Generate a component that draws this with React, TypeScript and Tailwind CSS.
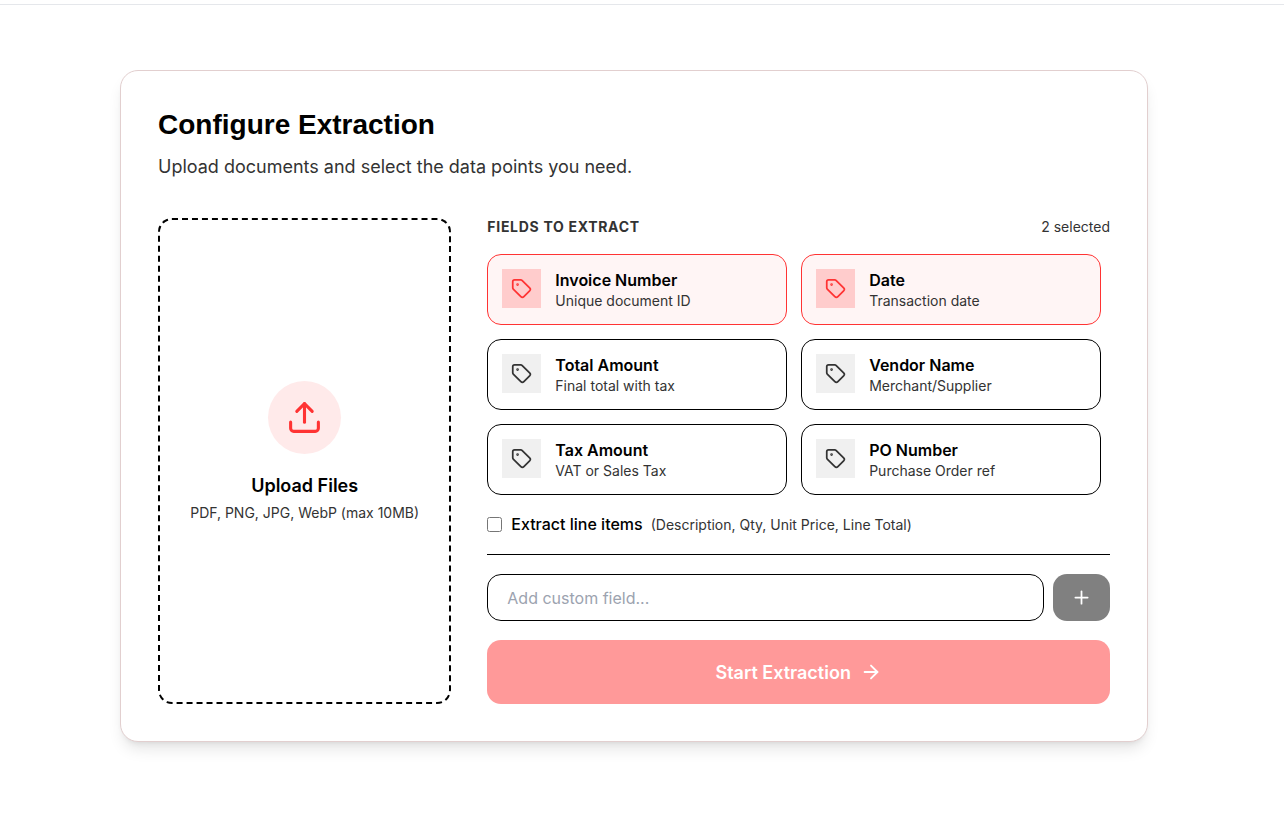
import { ArrowRight, Plus, Tag, Upload } from "lucide-react";
import { useState } from "react";

interface Field {
    id: string;
    label: string;
    description: string;
}

const defaultFields: Field[] = [
    { id: "invoice_number", label: "Invoice Number", description: "Unique document ID" },
    { id: "date", label: "Date", description: "Transaction date" },
    { id: "total_amount", label: "Total Amount", description: "Final total with tax" },
    { id: "vendor_name", label: "Vendor Name", description: "Merchant/Supplier" },
    { id: "tax_amount", label: "Tax Amount", description: "VAT or Sales Tax" },
    { id: "po_number", label: "PO Number", description: "Purchase Order ref" },
];

interface FieldCardProps {
    field: Field;
    selected: boolean;
    onToggle: (id: string) => void;
}

function FieldCard({ field, selected, onToggle }: FieldCardProps) {
    return (
        <button
            type="button"
            aria-pressed={selected}
            onClick={() => onToggle(field.id)}
            className={`flex items-start gap-[14px] rounded-[14px] border p-[14px] text-left cursor-pointer ${selected ? "border-[#ff3333] bg-[#fff5f5]" : "border-black bg-white"}`}
        >
            <span className={`flex size-[39px] shrink-0 items-center justify-center ${selected ? "bg-[#ffcccc] text-[#ff3333]" : "bg-[#f0f0f0] text-[#333333]"}`}>
                <Tag size={21} strokeWidth={2} />
            </span>
            <span className="flex flex-col">
                <span className="text-[16px] leading-[22px] font-semibold text-black">{field.label}</span>
                <span className="text-[14px] leading-[19px] text-[#333333]">{field.description}</span>
            </span>
        </button>
    );
}

export default function App() {
    const [fields, setFields] = useState(defaultFields);
    const [selected, setSelected] = useState(["invoice_number", "date"]);
    const [lineItems, setLineItems] = useState(false);
    const [custom, setCustom] = useState("");

    const toggleField = (id: string) => {
        setSelected(selected.includes(id) ? selected.filter((item) => item !== id) : [...selected, id]);
    };

    const addField = () => {
        const label = custom.trim();
        if (!label) return;
        setFields([...fields, { id: label, label, description: "Custom field" }]);
        setSelected([...selected, label]);
        setCustom("");
    };

    return (
        <div className="min-h-screen bg-white pt-1 font-['Inter',sans-serif] text-black">
            <header className="border-t border-[#e5e7eb]" />

            <main className="pt-[65px] pb-[73px] pl-4 pr-8">
                <section className="mx-auto max-w-[1028px] rounded-[18px] border border-[#e2cfcf] bg-white p-[37px] shadow-lg">
                    <h1 className="font-['Liberation_Sans',Arial,sans-serif] text-[28px] leading-[34px] font-bold">Configure Extraction</h1>
                    <p className="mt-3 text-[18px] leading-[26px] text-[#333333]">
                        Upload documents and select the data points you need.
                    </p>

                    <div className="mt-[38px] grid grid-cols-3 gap-9">
                        <label className="flex cursor-pointer flex-col items-center justify-center rounded-[14px] border-2 border-dashed border-black text-center">
                            <input type="file" multiple className="sr-only" />
                            <span className="flex size-[73px] items-center justify-center rounded-full bg-[#ffeaea] text-[#ff3333]">
                                <Upload size={37} />
                            </span>
                            <span className="mt-[19px] text-[18px] leading-[26px] font-semibold">Upload Files</span>
                            <span className="mt-1 mb-[18px] text-[14px] leading-5 text-[#333333]">PDF, PNG, JPG, WebP (max 10MB)</span>
                        </label>

                        <div className="col-span-2">
                            <div className="flex items-center justify-between text-[14px] leading-[18px] text-[#333333]">
                                <h2 className="font-bold tracking-wider uppercase">Fields to Extract</h2>
                                <span>{selected.length} selected</span>
                            </div>

                            <div className="mt-[18px] grid grid-cols-2 gap-[14px] pr-[9px]">
                                {fields.map((field) => (
                                    <FieldCard
                                        key={field.id}
                                        field={field}
                                        selected={selected.includes(field.id)}
                                        onToggle={toggleField}
                                    />
                                ))}
                            </div>

                            <div className="flex items-center border-b border-black pt-[18px] pb-[19px]">
                                <label className="flex items-center gap-[9px] text-[16px] leading-[22px] font-medium">
                                    <input
                                        type="checkbox"
                                        checked={lineItems}
                                        onChange={(e) => setLineItems(e.target.checked)}
                                        className="size-[15px]"
                                    />
                                    Extract line items
                                </label>
                                <span className="ml-2 text-[14px] leading-[19px] text-[#333333]">
                                    (Description, Qty, Unit Price, Line Total)
                                </span>
                            </div>

                            <div className="mt-[19px] flex gap-[9px]">
                                <input
                                    type="text"
                                    aria-label="Custom field"
                                    placeholder="Add custom field..."
                                    value={custom}
                                    onChange={(e) => setCustom(e.target.value)}
                                    className="h-[47px] min-w-0 flex-1 rounded-[14px] border border-black px-[19px] text-[16px] placeholder:text-[#9ca3af]"
                                />
                                <button
                                    type="button"
                                    aria-label="Add field"
                                    onClick={addField}
                                    className="flex w-[57px] items-center justify-center rounded-[14px] bg-[#808080] text-white"
                                >
                                    <Plus size={21} />
                                </button>
                            </div>

                            <button
                                type="button"
                                className="mt-[19px] flex h-16 w-full items-center justify-center gap-[9px] rounded-[14px] bg-[#ff9999] text-[18px] font-semibold text-white"
                            >
                                Start Extraction
                                <ArrowRight size={22} />
                            </button>
                        </div>
                    </div>
                </section>
            </main>
        </div>
    );
}
